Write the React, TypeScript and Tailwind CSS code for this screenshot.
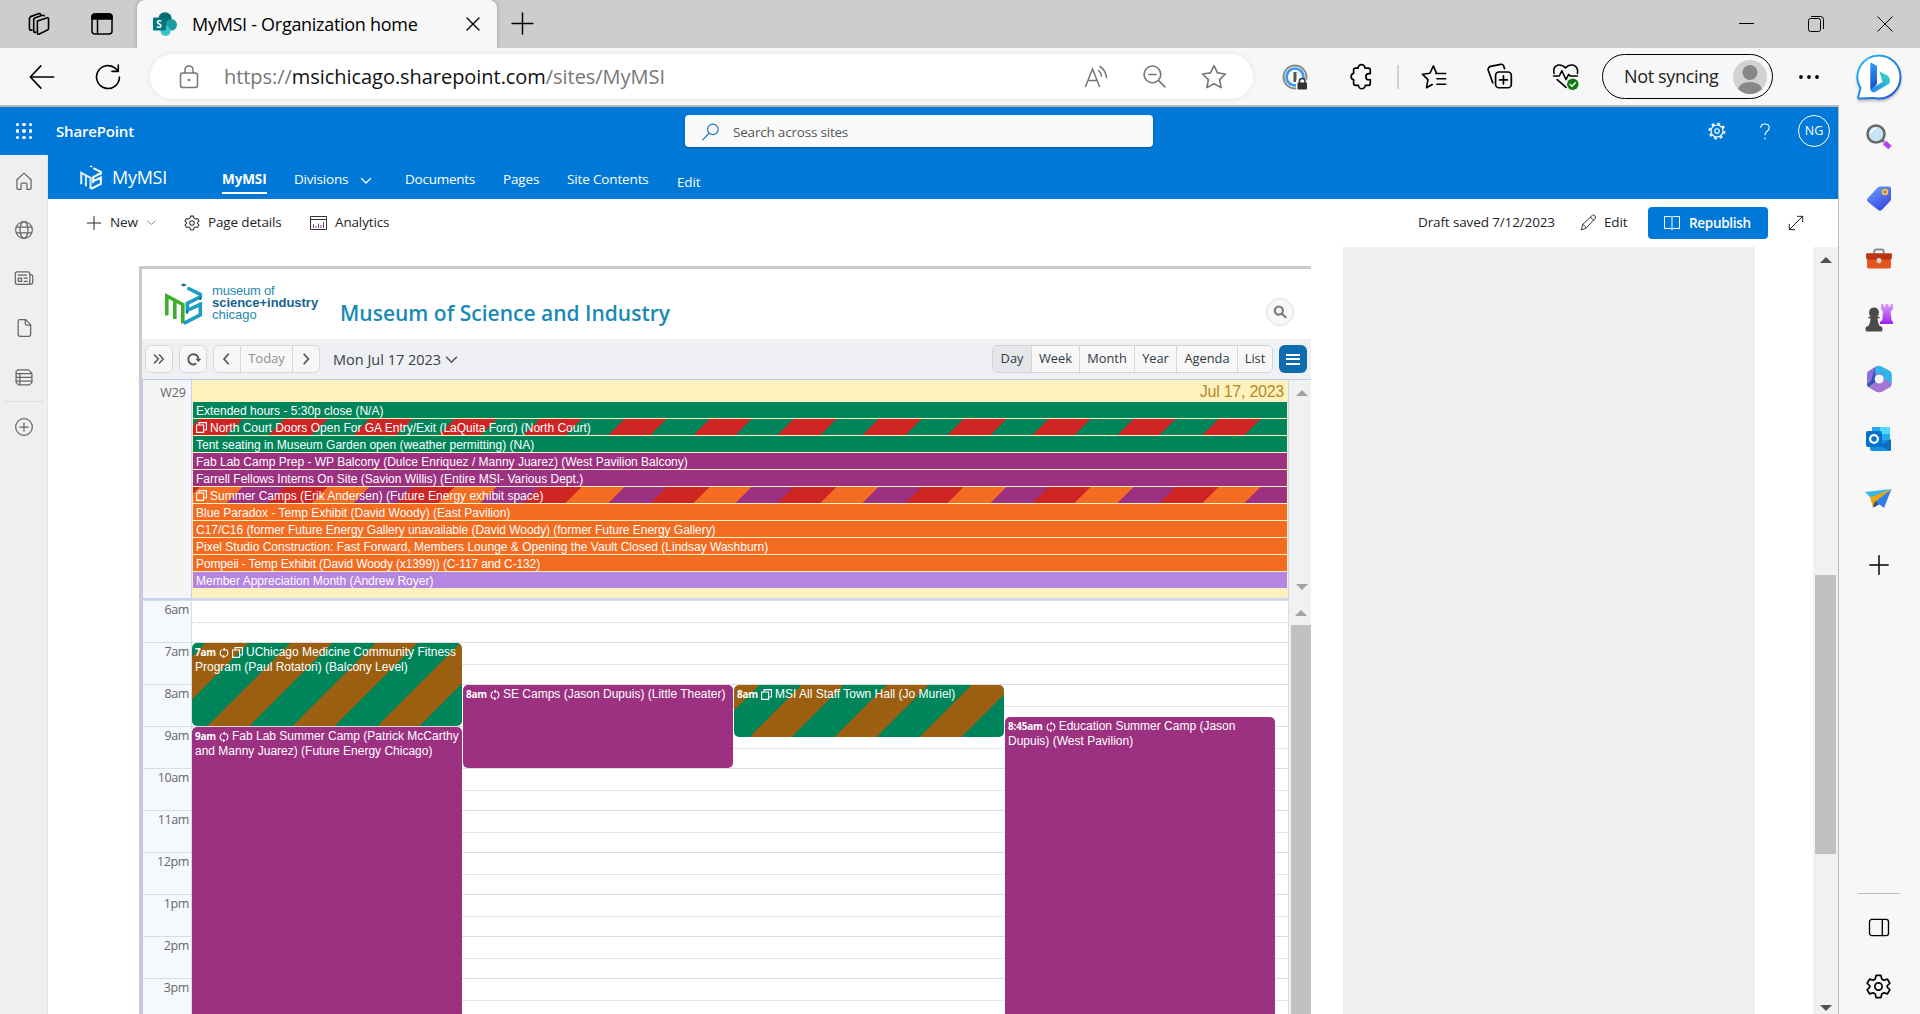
import type { ReactNode, SVGProps } from 'react';

type IconProps = SVGProps<SVGSVGElement> & { children?: ReactNode };

function Line({ children, ...rest }: IconProps) {
  return (
    <svg viewBox="0 0 24 24" fill="none" stroke="currentColor" strokeWidth={1.5} strokeLinecap="round" strokeLinejoin="round" {...rest}>
      {children}
    </svg>
  );
}

const GEAR =
  'M10 2.8h4l.7 3 1.8 1 2.9-.9 2 3.4-2.2 2.1v1.2l2.2 2.1-2 3.4-2.9-.9-1.8 1-.7 3h-4l-.7-3-1.8-1-2.9.9-2-3.4 2.2-2.1v-1.2L2.6 9.3l2-3.4 2.9.9 1.8-1z';

function Gear(props: IconProps) {
  return (
    <Line {...props}>
      <path d={GEAR} />
      <circle cx="12" cy="12" r="3" />
    </Line>
  );
}

function CogTeeth(props: IconProps) {
  return (
    <Line {...props}>
      <circle cx="12" cy="12" r="8" />
      <circle cx="12" cy="12" r="3" />
      <circle cx="12" cy="12" r="10" strokeWidth={2.6} strokeDasharray="3.9 3.95" strokeLinecap="butt" />
    </Line>
  );
}

function MsiMark({ m, s, dark, className }: { m: string; s: string; dark: string; className: string }) {
  return (
    <svg viewBox="163 282 41 44" fill="none" strokeWidth={3.6} className={className}>
      <path d="M166.800 315.500V296l16 8.500v19" stroke={m} />
      <path d="M174.800 300v19" stroke={m} />
      <path d="M187.500 288l12.800 6.300v2.500l-13 6.500v7l13-6v10.500l-16.500 8.500" stroke={s} />
      <path d="M180.500 285l3.200-1.600 3.200 1.600-3.200 1.600z" fill={dark} />
      <path d="M187.300 310.300v3.500M200.300 297v3" stroke={dark} strokeWidth={2} />
    </svg>
  );
}

function SharePointLogo() {
  return (
    <svg viewBox="0 0 24 24" className="h-6 w-6">
      <circle cx="12" cy="7" r="6.800" fill="#036c70" />
      <circle cx="18.200" cy="12.800" r="5.800" fill="#1a9ba1" />
      <circle cx="12.500" cy="19" r="5" fill="#37c6d0" />
      <rect x="0" y="5.500" width="13" height="13" rx="1" fill="#03787c" />
      <text x="3.300" y="15.600" fontSize="10" fontWeight="700" fill="#fff" fontFamily="Open Sans, sans-serif">S</text>
    </svg>
  );
}

function TabBar() {
  return (
    <div className="flex h-12 bg-[#cdcdcd] text-black">
      <div className="flex w-[137px] items-center">
        <Line className="ml-[26px] h-[26px] w-[26px]" strokeWidth={1.500}>
          <path d="M10.500 9.200 19 6.400q1.800-.5 1.800 1.200v8.600q0 1-1 1.400l-7.500 3.600q-1.800.7-1.800-1z" />
          <path d="M9 19.500q-1.900.7-1.900-1V8q0-1 1-1.500l7-2.500q1.300-.4 1.800.5" />
          <path d="M5.500 17.500q-2.300.6-2.300-1.200V6.600q0-1 1-1.400l7.200-2.600q1.400-.4 2 .3" />
        </Line>
        <svg viewBox="0 0 22 22" className="ml-[39px] h-[22px] w-[22px]" fill="none" stroke="#000" strokeWidth="1.500">
          <rect x="1" y="1" width="20" height="20" rx="3" />
          <path d="M1 6V4q0-3 3-3h14q3 0 3 3v2z" fill="#000" />
          <path d="M6.500 6v15" />
        </svg>
      </div>
      <div className="flex w-[360px] items-center rounded-t-[8px] bg-[#f7f7f7] pl-4 shadow-[0_0_4px_rgba(0,0,0,0.25)] [clip-path:inset(0_-4px_0_-4px)]">
        <SharePointLogo />
        <span className="ml-[15px] w-[272px] whitespace-nowrap text-[18px] tracking-[-0.29px]">MyMSI - Organization home</span>
        <Line className="ml-0 h-[18px] w-[18px] shrink-0" strokeWidth={1.800}>
          <path d="M4 4l16 16M20 4 4 20" />
        </Line>
      </div>
      <div className="flex flex-1 items-center">
        <Line className="ml-[13px] mb-[2px] h-[25px] w-[25px]" strokeWidth={1.400}>
          <path d="M12 2v20M2 12h20" />
        </Line>
        <div className="ml-auto mb-px flex items-center">
          <div className="h-px w-[15px] bg-black" />
          <svg viewBox="0 0 16 16" className="ml-[54px] h-4 w-4" fill="none" stroke="#000">
            <rect x=".5" y="2.500" width="12" height="13" rx="2" />
            <path d="M3 .5h9.500q3 0 3 3v9.500" />
          </svg>
          <svg viewBox="0 0 16 16" className="ml-[53px] mr-[27px] h-4 w-4" fill="none" stroke="#000">
            <path d="M.5.5l15 15M15.500.5l-15 15" />
          </svg>
        </div>
      </div>
    </div>
  );
}

function BingLogo() {
  return (
    <svg viewBox="0 0 46 46" className="ml-[36px] h-[46px] w-[46px] drop-shadow-[0_2px_1px_rgba(0,0,0,0.25)]">
      <defs>
        <linearGradient id="bingRing" x1="0" y1="0" x2="1" y2="1">
          <stop offset="0" stopColor="#29c3f1" />
          <stop offset="1" stopColor="#1b4fd8" />
        </linearGradient>
        <linearGradient id="bingB" x1="0" y1="0" x2="0" y2="1">
          <stop offset="0" stopColor="#2a9df4" />
          <stop offset="1" stopColor="#1749c9" />
        </linearGradient>
        <linearGradient id="bingTail" x1="1" y1="0" x2="0" y2="1">
          <stop offset="0" stopColor="#3be0c0" />
          <stop offset="1" stopColor="#1d7ff0" />
        </linearGradient>
      </defs>
      <path d="M23 1.500a21.500 21.500 0 1 1 0 43q-2.500 0-5-.6L3.500 44.500q-1.500 0-1.300-1.500L4.500 34A21.500 21.500 0 0 1 23 1.500z" fill="#fff" stroke="url(#bingRing)" strokeWidth="2" />
      <path d="M15 8.500l6 3.500v18l-6 6.500q-.7-1-.7-3V9z" fill="url(#bingB)" />
      <path d="M23.500 17.500l8 4q3.500 2.500 2 8L19 38q-4 1-4.500-3l12-7z" fill="url(#bingTail)" />
    </svg>
  );
}

function AddressBar() {
  return (
    <div className="flex h-[57px] items-center bg-[#f7f7f7] text-black">
      <Line className="ml-[28px] h-[28px] w-[28px]" strokeWidth={1.400}>
        <path d="M22 12H2.500M11 2.500 2 12l9 9.500" />
      </Line>
      <Line className="ml-[38px] h-[28px] w-[28px]" strokeWidth={1.400}>
        <path d="M21.800 12A9.800 9.800 0 1 1 18.500 4.700L20.500 6.800M20.800 1.800v5.400h-5.400" />
      </Line>
      <div className="ml-[28px] flex h-[45px] w-[1103px] items-center rounded-full bg-white text-[#767676] shadow-[0_0_6px_rgba(0,0,0,0.08)]">
        <svg viewBox="0 0 20 24" className="ml-[29px] h-6 w-5" fill="none" stroke="currentColor" strokeWidth="1.500">
          <rect x="1.500" y="8" width="17" height="14.500" rx="2.500" />
          <path d="M6 8V5q0-4 4-4t4 4v3" />
          <circle cx="10" cy="15" r="1.300" fill="currentColor" stroke="none" />
        </svg>
        <span className="ml-[25px] w-[860px] whitespace-nowrap text-[20px] tracking-[-0.05px]">
          https://<span className="text-[#111]">msichicago.sharepoint.com</span>/sites/MyMSI
        </span>
        <svg viewBox="0 0 24 24" className="h-6 w-6 shrink-0" fill="none" stroke="currentColor" strokeWidth="1.500" strokeLinecap="round">
          <path d="M1.500 21.500 8.500 4l7 17.500M4 15.500h9M14.500 5.500q2.500 2 3 5.500M16 1.500q5.500 3.500 6.500 11" />
        </svg>
        <Line className="ml-[34px] h-[25px] w-[25px] shrink-0" strokeWidth={1.500}>
          <circle cx="10" cy="10" r="8" />
          <path d="M16 16l6 6M6.500 10h7" />
        </Line>
        <Line className="ml-[33px] h-[28px] w-[28px] shrink-0" strokeWidth={1.400}>
          <path d="M12 2.200l3 6.300 6.800.9-5 4.800 1.300 6.900-6.100-3.300-6.100 3.300 1.300-6.900-5-4.800 6.800-.9z" />
        </Line>
      </div>
      <svg viewBox="0 0 26 26" className="ml-[29px] h-[26px] w-[26px]" fill="none">
        <circle cx="13" cy="13" r="11.500" stroke="#8b8b8b" strokeWidth="2" />
        <circle cx="13" cy="13" r="8.500" stroke="#3b99f5" strokeWidth="2.600" />
        <path d="M13 8v10" stroke="#555" strokeWidth="3" />
        <rect x="14" y="15" width="11" height="11" rx="2" fill="#f7f7f7" />
        <rect x="15.500" y="18.500" width="9.500" height="7" rx="1" fill="#333" />
        <path d="M17.500 19v-2q0-2.500 2.700-2.500T23 17v2" stroke="#333" strokeWidth="1.500" />
      </svg>
      <Line className="ml-[40px] h-[27px] w-[27px]" strokeWidth={1.500}>
        <path d="M6.500 4.500H9a3 3 0 0 1 6 0h3q1.800 0 1.800 1.800V9.500h-1.200a2.700 2.700 0 0 0 0 5.400h1.200v3q0 2-1.800 2H15.300a3 3 0 0 1-6 0H6.800Q5 19.900 5 18v-3a3 3 0 0 1 0-5.800V6.300Q5 4.500 6.500 4.500z" />
      </Line>
      <div className="ml-[22px] h-6 w-[2px] bg-[#d0d0d0]" />
      <Line className="ml-[21px] h-[28px] w-[28px]" strokeWidth={1.400}>
        <path d="M14 8.500 11.500 2.500 8.500 8.800l-6.500.8 4.800 4.600L5.600 21.200l4.900-2.700M13.500 9H22M14.500 13.500H22M14.500 18.200H22" />
      </Line>
      <Line className="ml-[38px] h-[27px] w-[27px]" strokeWidth={1.500}>
        <rect x="8.500" y="8" width="14" height="14" rx="3" />
        <path d="M15.500 11.500v7M12 15h7M6 17.500 2 6.500Q1.300 4 4 3l9-1.800q2-.4 2.700 1.400L16.500 5" />
      </Line>
      <svg viewBox="0 0 26 26" className="ml-[39px] h-[27px] w-[27px]" fill="none" stroke="#000" strokeWidth="1.500" strokeLinecap="round" strokeLinejoin="round">
        <path d="M2 10Q.5 3.500 6 2q4-.8 7 2.700Q16 1.200 20 2q5.500 1.500 4.500 8M1.500 12.500H7l2.500-5 4 8.500 2.500-5 1.500 1.500h7M5 16l8.500 7.500" />
        <circle cx="20" cy="20.500" r="5.500" fill="#107c10" stroke="none" />
        <path d="M17.500 20.700l1.800 1.700 3.200-3.300" stroke="#fff" strokeWidth="1.400" />
      </svg>
      <div className="ml-[23px] flex h-[45px] w-[171px] items-center rounded-full border-[1.500px] border-black">
        <span className="ml-[21px] w-[109px] whitespace-nowrap text-[18px] tracking-[-0.34px] text-[#222]">Not syncing</span>
        <svg viewBox="0 0 34 34" className="h-[34px] w-[34px]">
          <circle cx="17" cy="17" r="17" fill="#d4d2d0" />
          <circle cx="17" cy="12.500" r="7.500" fill="#8a8886" />
          <path d="M5 29q2-7 12-7t12 7q-5 5-12 5T5 29z" fill="#8a8886" />
        </svg>
      </div>
      <svg viewBox="0 0 22 6" className="ml-[25px] h-[6px] w-[22px]">
        <circle cx="3" cy="3" r="1.900" />
        <circle cx="11" cy="3" r="1.900" />
        <circle cx="19" cy="3" r="1.900" />
      </svg>
      <BingLogo />
    </div>
  );
}

function SuiteHeader() {
  return (
    <div className="flex h-12 items-center bg-[#0078d7] text-white">
      <div className="ml-[16px] grid w-4 grid-cols-3 gap-[3px]">
        {Array.from({ length: 9 }, (_, i) => (
          <span key={i} className="h-[3.300px] w-[3.300px] rounded-full bg-white" />
        ))}
      </div>
      <span className="ml-[24px] w-[629px] text-[15px] font-semibold tracking-[-0.17px]">SharePoint</span>
      <div className="flex h-8 w-[468px] items-center rounded-[4px] bg-[#fafafa] shadow-[0_1px_2px_rgba(0,0,0,0.3)]">
        <Line className="ml-[17px] mt-px h-[18px] w-[18px] text-[#0f6cbd]" strokeWidth={1.500}>
          <circle cx="14.500" cy="8.500" r="7" />
          <path d="M9.500 13.500 1 22.500" />
        </Line>
        <span className="ml-[13px] mt-[2px] text-[13.500px] tracking-[-0.2px] text-[#555]">Search across sites</span>
      </div>
      <CogTeeth className="ml-[555px] h-[18px] w-[18px]" strokeWidth={1.500} />
      <svg viewBox="0 0 12 18" className="ml-[33px] h-[17px] w-[12px]" fill="none" stroke="#fff" strokeWidth="1.200">
        <path d="M1.500 5Q1.500 1 6 1t4.500 4q0 2-2.300 3.800Q6 10.500 6 13" />
        <path d="M6 15.500v1.800" strokeWidth="1.500" />
      </svg>
      <div className="ml-[27px] flex h-8 w-8 items-center justify-center rounded-full border border-white pt-px text-[12.500px]">NG</div>
    </div>
  );
}

function SiteNav() {
  return (
    <div className="flex h-11 bg-[#0078d7] text-[13.500px] text-white">
      <div className="flex w-[174px] items-center pl-[31px]">
        <MsiMark m="#d5ebfb" s="#fff" dark="#fff" className="h-[27px] w-6" />
        <span className="ml-[9px] text-[18px] tracking-[-0.26px]">MyMSI</span>
      </div>
      <div className="flex pt-[14px] leading-[20px] tracking-[-0.15px] whitespace-nowrap">
        <div className="h-[25px] w-[45px] border-b-2 border-white font-bold tracking-[-0.1px]">MyMSI</div>
        <div className="ml-[27px] w-[55px] tracking-[-0.2px]">Divisions</div>
        <Line className="ml-[11px] mt-[6px] h-[12px] w-[12px]" strokeWidth={2.600}>
          <path d="M3 7l9 9 9-9" />
        </Line>
        <div className="ml-[33px] w-[70px] tracking-[-0.25px]">Documents</div>
        <div className="ml-[28px] w-[37px]">Pages</div>
        <div className="ml-[27px] w-[82px]">Site Contents</div>
        <div className="ml-[28px] mt-[3px]">Edit</div>
      </div>
    </div>
  );
}

function CommandBar() {
  return (
    <div className="flex h-12 items-center bg-white pb-px text-[13.500px] tracking-[-0.15px] whitespace-nowrap text-[#252525]">
      <Line className="ml-[38px] h-4 w-4" strokeWidth={1.500}>
        <path d="M12 2v20M2 12h20" />
      </Line>
      <span className="ml-[8px] w-[29px]">New</span>
      <Line className="ml-[8px] h-[9px] w-[9px] text-[#666]" strokeWidth={2}>
        <path d="M2 8l10 9 10-9" />
      </Line>
      <Gear className="ml-[27px] h-[18px] w-[18px] text-[#333]" strokeWidth={1.400} />
      <span className="ml-[7px] w-[75px]">Page details</span>
      <svg viewBox="0 0 17 14" className="ml-[27px] h-[14px] w-[17px]" fill="none" stroke="#333">
        <path d="M.5.5h16v13H.5zM.5 3.500h16" />
        <path d="M3.500 12V8.500M6 12v-2M8.500 12V7.500M11 12V9M13.500 12V6" stroke="#6b3a78" />
      </svg>
      <span className="ml-[8px]">Analytics</span>
      <span className="ml-auto w-[138px] tracking-[-0.13px]">Draft saved 7/12/2023</span>
      <Line className="ml-[24px] h-[17px] w-[17px]" strokeWidth={1.300}>
        <path d="M2 22l2-7.500L17.500 1.800q1.800-1 3.500.7t.6 3.500L9 19.500zM15 4.500 19.500 9M4.500 15l4.500 4.500" />
      </Line>
      <span className="ml-[7px] w-[24px]">Edit</span>
      <button className="ml-[20px] mt-px flex h-8 w-[120px] items-center rounded-[4px] bg-[#0078d7] font-semibold tracking-[-0.3px] text-white">
        <svg viewBox="0 0 16 16" className="ml-4 h-4 w-4" fill="none" stroke="#fff">
          <path d="M.5 1.500h6Q8 1.500 8 2.500v12q0-1-1.500-1h-6zM15.500 1.500h-6Q8 1.500 8 2.500M8 14.500q0-1 1.500-1h6v-12" />
        </svg>
        <span className="ml-[9px]">Republish</span>
      </button>
      <Line className="ml-[20px] mr-[34px] h-4 w-4" strokeWidth={1.500}>
        <path d="M2 22 22 2M14 2h8v8M2 14v8h8" />
      </Line>
    </div>
  );
}

function LeftRail() {
  return (
    <nav className="flex w-12 shrink-0 flex-col items-center border-r border-[#e6e6e6] bg-[#efefef] text-[#666]">
      <Line className="mt-[16px] h-5 w-5">
        <path d="M3.500 10.500 12 2.500l8.500 8v10q0 1.500-1.500 1.500h-3.500v-6q0-1.500-1.500-1.500h-4q-1.500 0-1.500 1.500v6H5q-1.500 0-1.500-1.500z" />
      </Line>
      <Line className="mt-[29px] h-5 w-5">
        <circle cx="12" cy="12" r="10" />
        <ellipse cx="12" cy="12" rx="4.800" ry="10" />
        <path d="M3 8.500h18M3 15.500h18" />
      </Line>
      <Line className="mt-[28px] h-5 w-5">
        <rect x="1.500" y="4.500" width="17.500" height="15" rx="2.500" />
        <path d="M19 8h1q2.500 0 2.500 2.500V17q0 2.500-3.500 2.500M5 8.500h10M5 12h4v4H5zM12 12h4M12 16h4" />
      </Line>
      <Line className="mt-[30px] h-5 w-5">
        <path d="M6.500 2H14l6 6v11.500q0 2.500-2.500 2.500h-10Q5 22 5 19.500V4q0-2 1.500-2zM13.500 2.500v4q0 2 2 2h4" />
      </Line>
      <Line className="mt-[29px] h-5 w-5">
        <path d="M4.500 3.500h13l4 4v11l-3 3h-13l-3-3v-13zM2.500 8h19M2.500 12.500h19M2.500 17h19M7 8v13" />
      </Line>
      <div className="mt-[14px] h-px w-[38px] bg-[#dedede]" />
      <Line className="mt-[15px] h-5 w-5">
        <circle cx="12" cy="12" r="10" />
        <path d="M12 7v10M7 12h10" />
      </Line>
    </nav>
  );
}

const CAL_BUTTON = 'flex h-7 items-center justify-center border-[#d5d7da] bg-[#f7f7f7] text-[13px]';
const VIEWS = [
  { label: 'Day', width: 'w-[38px] bg-[#e4e6ea]' },
  { label: 'Week', width: 'w-[48px] border-l bg-[#f7f7f7]' },
  { label: 'Month', width: 'w-[55px] border-l bg-[#f7f7f7]' },
  { label: 'Year', width: 'w-[42px] border-l bg-[#f7f7f7]' },
  { label: 'Agenda', width: 'w-[61px] border-l bg-[#f7f7f7]' },
  { label: 'List', width: 'w-[35px] border-l bg-[#f7f7f7]' },
];

function CalendarHeader() {
  return (
    <div className="flex h-[70px] bg-white">
      <div className="flex w-[198px] pl-[21px] pt-[13px]">
        <MsiMark m="#3dae2b" s="#1d9dc6" dark="#15688f" className="h-[44px] w-[41px]" />
        <div className="ml-[8px] mt-[3px] font-['Liberation_Sans',Arial,sans-serif] text-[13px] leading-[12px] text-[#2488ad]">
          <div className="tracking-[-0.2px] whitespace-nowrap">museum of</div>
          <div className="font-bold tracking-[-0.03px] text-[#156390]">science+industry</div>
          <div>chicago</div>
        </div>
      </div>
      <h1 className="mt-[30px] text-[21px] leading-[28px] font-semibold whitespace-nowrap text-[#1a8ab5]">Museum of Science and Industry</h1>
      <div className="ml-auto mr-[17px] mt-[29px] flex h-7 w-7 items-center justify-center rounded-full border border-[#d8dada] bg-[#f7f7f7]">
        <Line className="h-[14px] w-[14px] text-[#737d86]" strokeWidth={3.600}>
          <circle cx="10" cy="9.500" r="7" />
          <path d="M15.500 15l6 6" />
        </Line>
      </div>
    </div>
  );
}

function CalendarToolbar() {
  return (
    <div className="flex h-10 items-center bg-[#eff0f3] text-[#555]">
      <div className={`${CAL_BUTTON} ml-[3px] w-7 rounded-[6px] border`}>
        <Line className="h-[12px] w-[12px]" strokeWidth={3} strokeLinecap="butt" strokeLinejoin="miter">
          <path d="M2 3l8.500 9L2 21M12 3l8.500 9-8.500 9" />
        </Line>
      </div>
      <div className={`${CAL_BUTTON} ml-[6px] w-7 rounded-[6px] border`}>
        <Line className="h-[15px] w-[15px]" strokeWidth={3} strokeLinecap="butt">
          <path d="M16.500 18.500a8.200 8.200 0 1 1 3.500-7.500" />
          <path d="M15.500 11h8.500l-4.300 4.500z" fill="currentColor" strokeWidth={.5} />
        </Line>
      </div>
      <div className="ml-[6px] flex rounded-[6px]">
        <div className={`${CAL_BUTTON} w-[28px] rounded-l-[6px] border`}>
          <Line className="h-[14px] w-[14px]" strokeWidth={3} strokeLinecap="butt" strokeLinejoin="miter"><path d="M15 3 7 12l8 9" /></Line>
        </div>
        <div className={`${CAL_BUTTON} w-[51px] border-y text-[#8a8f94]`}>Today</div>
        <div className={`${CAL_BUTTON} w-[28px] rounded-r-[6px] border`}>
          <Line className="h-[14px] w-[14px]" strokeWidth={3} strokeLinecap="butt" strokeLinejoin="miter"><path d="M8 3l8 9-8 9" /></Line>
        </div>
      </div>
      <span className="ml-[13px] w-[112px] pt-px text-[14.500px] whitespace-nowrap text-[#3a4046]">Mon Jul 17 2023</span>
      <Line className="h-[13px] w-[13px]" strokeWidth={3} strokeLinecap="butt" strokeLinejoin="miter"><path d="M2 7l10 10L22 7" /></Line>
      <div className="ml-auto flex overflow-hidden rounded-[6px] border border-[#d0d2d5]">
        {VIEWS.map((v) => (
          <div key={v.label} className={`flex h-[26px] items-center justify-center border-[#d5d7da] text-[12.800px] text-[#2f3a44] ${v.width}`}>
            {v.label}
          </div>
        ))}
      </div>
      <div className="ml-[6px] mr-1 flex h-7 w-7 flex-col items-center justify-center gap-[2.500px] rounded-[6px] bg-[#0c6cad]">
        <span className="h-[2px] w-[14px] bg-white" />
        <span className="h-[2px] w-[14px] bg-white" />
        <span className="h-[2px] w-[14px] bg-white" />
      </div>
    </div>
  );
}

function CopyIcon({ className = '' }: { className?: string }) {
  return (
    <svg viewBox="0 0 11 11" className={`inline-block h-[11px] w-[11px] ${className}`} fill="none" stroke="#fff" strokeWidth="1.100">
      <path d="M.6 3h7v7.400h-7zM3 3V.6h7.400v7.400H7.600" />
    </svg>
  );
}

function RepeatIcon() {
  return (
    <svg viewBox="0 0 11 12" className="mx-[3px] inline-block h-[12px] w-[10px] align-[-3px]" fill="none" stroke="#fff" strokeWidth="1.200">
      <path d="M4 9.800Q1.200 9 1.200 6q0-2.500 2-3.600M7 2.200Q9.800 3 9.800 6q0 2.500-2 3.600" />
      <path d="M6.500 0v4.200L3.800 2.200zM4.500 12V7.800l2.700 2z" fill="#fff" stroke="none" />
    </svg>
  );
}

const ALL_DAY = [
  { text: 'Extended hours - 5:30p close (N/A)', color: 'bg-[#00855b]' },
  { text: 'North Court Doors Open For GA Entry/Exit (LaQuita Ford) (North Court)', color: 'bg-[repeating-linear-gradient(-45deg,#00855b_0_30px,#cf2424_30px_60px)]', copy: true },
  { text: 'Tent seating in Museum Garden open (weather permitting) (NA)', color: 'bg-[#00855b]' },
  { text: 'Fab Lab Camp Prep - WP Balcony (Dulce Enriquez / Manny Juarez) (West Pavilion Balcony)', color: 'bg-[#9c3182]' },
  { text: 'Farrell Fellows Interns On Site (Savion Willis) (Entire MSI- Various Dept.)', color: 'bg-[#9c3182]' },
  { text: 'Summer Camps (Erik Andersen) (Future Energy exhibit space)', color: 'bg-[repeating-linear-gradient(-45deg,#9c3182_0_30px,#f36c21_30px_60px,#cf2424_60px_90px)]', copy: true },
  { text: 'Blue Paradox - Temp Exhibit (David Woody) (East Pavilion)', color: 'bg-[#f36c21]' },
  { text: 'C17/C16 (former Future Energy Gallery unavailable (David Woody) (former Future Energy Gallery)', color: 'bg-[#f36c21] tracking-[-0.04px]' },
  { text: 'Pixel Studio Construction: Fast Forward, Members Lounge & Opening the Vault Closed (Lindsay Washburn)', color: 'bg-[#f36c21]' },
  { text: 'Pompeii - Temp Exhibit (David Woody (x1399)) (C-117 and C-132)', color: 'bg-[#f36c21] tracking-[-0.12px]' },
  { text: 'Member Appreciation Month (Andrew Royer)', color: 'bg-[#b585e1]' },
];

function Triangle({ down = false, className }: { down?: boolean; className: string }) {
  return (
    <svg viewBox="0 0 12 6" className={`h-[6px] w-[12px] ${className}`} fill="currentColor">
      <path d={down ? 'M0 0h12L6 6z' : 'M0 6h12L6 0z'} />
    </svg>
  );
}

function AllDay() {
  return (
    <div className="flex h-[221px] border-t border-[#bccdf5]">
      <div className="w-[49px] border-r border-b-2 border-[#c3d3f5] bg-[#f5f5f5] pt-[3px] pr-[5px] text-right text-[12.500px] leading-[20px] text-[#666]">W29</div>
      <div className="w-[1097px] border-r border-b-2 border-[#c9d8f3] bg-[#fff1be] pl-px">
        <div className="h-[22px] pr-[4px] text-right font-['Liberation_Sans',Arial,sans-serif] text-[16px] leading-[23px] tracking-[-0.25px] text-[#b38a1e]">Jul 17, 2023</div>
        <div className="mr-px flex flex-col gap-px font-['Liberation_Sans',Arial,sans-serif] text-[12px] leading-[16px] text-white">
          {ALL_DAY.map((e) => (
            <div key={e.text} className={`flex h-4 items-center pl-[3px] pt-px whitespace-nowrap ${e.color}`}>
              {e.copy && <CopyIcon className="mr-[3px] -mt-px" />}
              {e.text}
            </div>
          ))}
        </div>
      </div>
      <div className="flex flex-1 flex-col items-center justify-between bg-[#f1f1f1] pt-[10px] pb-[10px] pl-[3px] text-[#a3a3a3]">
        <Triangle className="" />
        <Triangle down className="" />
      </div>
    </div>
  );
}

const HOURS = ['6am', '7am', '8am', '9am', '10am', '11am', '12pm', '1pm', '2pm', '3pm'];
const BROWN_GREEN = 'bg-[repeating-linear-gradient(-45deg,#00855b_0_30px,#9c5f12_30px_60px)]';

function Event({ time, repeat, copy, children, className }: { time: string; repeat?: boolean; copy?: boolean; children: ReactNode; className: string }) {
  return (
    <div className={`w-[270px] overflow-hidden rounded-[5px] pl-[3px] pt-[2px] font-['Liberation_Sans',Arial,sans-serif] text-[12px] leading-[15px] text-white ${className}`}>
      <span className="font-['Open_Sans',sans-serif] text-[10px] font-bold tracking-[-0.2px]">{time}</span>
      {repeat && <RepeatIcon />}
      {copy && <CopyIcon className={`align-[-2px] mr-[3px] ${repeat ? '' : 'ml-[3px]'}`} />}
      {children}
    </div>
  );
}

function DayGrid() {
  return (
    <div className="flex h-[414px] overflow-hidden">
      <div className="relative w-[1146px]">
        {HOURS.map((h) => (
          <div key={h} className="flex h-[42px]">
            <div className="w-[49px] border-r border-t border-[#dcdcdc] bg-[#f5f9fd] pr-[2px] text-right text-[12.500px] leading-[18px] tracking-[-0.4px] text-[#666]">{h}</div>
            <div className="w-[1097px] border-t border-r border-[#dcdcdc]">
              <div className="h-[22px] border-b border-dotted border-[#d0d0d0]" />
            </div>
          </div>
        ))}
        <div className="absolute inset-y-0 left-[49px] flex items-start gap-px">
          <div className="flex flex-col gap-px pt-[43px]">
            <Event time="7am" repeat copy className={`h-[83px] ${BROWN_GREEN}`}>
              UChicago Medicine Community Fitness Program (Paul Rotatori) (Balcony Level)
            </Event>
            <Event time="9am" repeat className="h-[330px] bg-[#9c3182]">
              Fab Lab Summer Camp (Patrick McCarthy and Manny Juarez) (Future Energy Chicago)
            </Event>
          </div>
          <Event time="8am" repeat className="mt-[85px] h-[83px] bg-[#9c3182] whitespace-nowrap">
            SE Camps (Jason Dupuis) (Little Theater)
          </Event>
          <Event time="8am" copy className={`mt-[85px] h-[52px] ${BROWN_GREEN}`}>
            MSI All Staff Town Hall (Jo Muriel)
          </Event>
          <Event time="8:45am" repeat className="mt-[117px] h-[330px] bg-[#9c3182]">
            Education Summer Camp (Jason Dupuis) (West Pavilion)
          </Event>
        </div>
      </div>
      <div className="flex flex-1 flex-col items-end bg-[#f1f1f1]">
        <Triangle className="mt-[10px] mr-[4px] mb-[9px] text-[#a3a3a3]" />
        <div className="w-5 flex-1 bg-[#c1c1c1]" />
      </div>
    </div>
  );
}

function Calendar() {
  return (
    <div className="ml-[91px] mt-[19px] flex w-[1172px] flex-col border-t-[3px] border-l-[3px] border-[#cbcbcb]">
      <CalendarHeader />
      <CalendarToolbar />
      <div className="border-l border-[#bccdf5]">
        <AllDay />
        <DayGrid />
      </div>
    </div>
  );
}

function EdgeSidebar() {
  return (
    <aside className="flex w-[81px] shrink-0 flex-col items-center bg-[#f7f7f7] pr-[2px]">
      <svg viewBox="0 0 26 26" className="mt-[19px] h-[26px] w-[26px]">
        <path d="M18.500 18.500l5.500 5" stroke="#b83df5" strokeWidth="5" />
        <path d="M15 15l3 3" stroke="#777" strokeWidth="3" />
        <circle cx="10" cy="10" r="8.500" fill="#c4e4f8" stroke="#666" strokeWidth="2.500" />
        <path d="M5 9q1-4 5-4.500" stroke="#fff" strokeWidth="1.500" fill="none" />
      </svg>
      <svg viewBox="0 0 26 26" className="mt-[35px] h-[26px] w-[26px]">
        <defs>
          <linearGradient id="tag" x1="0" y1="0" x2=".6" y2="1">
            <stop offset="0" stopColor="#6ba6ff" />
            <stop offset="1" stopColor="#3d46e8" />
          </linearGradient>
        </defs>
        <path d="M14 1.500h9q2 0 2 2V14q0 1-.8 2l-8.500 9q-1.800 1.500-3.500 0L2 17q-1.800-2-.3-3.800L12 2.300q1-.8 2-.8z" fill="url(#tag)" />
        <circle cx="19" cy="7" r="2.300" fill="#6c6fe0" stroke="#fbc02d" strokeWidth="2" />
      </svg>
      <svg viewBox="0 0 28 22" className="mt-[37px] h-[21px] w-[28px]">
        <path d="M9 6V4q0-2.500 2.500-2.500h5Q19 1.500 19 4v2" fill="none" stroke="#8b8b8b" strokeWidth="2" />
        <rect x="1.500" y="8" width="25" height="13.500" rx="1.500" fill="#e2551f" />
        <path d="M1.500 5.500h25q1 0 1 1V10q0 2-2 2h-23q-2 0-2-2V6.500q0-1 1-1z" fill="#b9340f" />
        <rect x="11.500" y="10.500" width="5" height="5.500" rx="2" fill="#d0d0d0" />
      </svg>
      <svg viewBox="0 0 28 28" className="mt-[35px] h-[28px] w-[28px]">
        <defs>
          <linearGradient id="rook" x1="0" y1="0" x2="0" y2="1">
            <stop offset="0" stopColor="#d9a0f7" />
            <stop offset="1" stopColor="#a020f0" />
          </linearGradient>
        </defs>
        <path d="M16 0h2.500v2.500h2V0h3v2.500h2V0H28v5l-2.500 2.500 1 8.500 1.500 2v2H15v-2l2.300-2 .7-8.500L16 5z" fill="url(#rook)" />
        <path d="M9 3.500a5 5 0 0 1 3.300 8.700q2.700.3 2.700 2H12.500q0 4.500 2 7.800 3 .5 3 2.500 0 3-1.500 3H2q-1.500 0-1.500-3 0-2 3-2.500 2-3.300 2-7.800H3q0-1.700 2.700-2A5 5 0 0 1 9 3.500z" fill="#4b4b4b" />
      </svg>
      <svg viewBox="0 0 26 28" className="mt-[33px] h-[28px] w-[26px]">
        <path d="M13 1 24 6.500q1.500 1 1.500 2.500v10q0 2-1.500 3l-8 4.500q-3 1.300-6 0L2.500 22Q1 21 1 19V9q0-2 1.500-3L10 1.500q1.500-.8 3-.5z" fill="#8d6fe0" />
        <path d="M10 1.500q3-1.300 5.500 0L24 6q1.500 1 1.500 3v10l-8.500-5V9L9 8q0-5 1-6.500z" fill="#2fb5e8" />
        <path d="M9 2.500V17l-6.500 5Q1 21 1 19l4-3z" fill="#2c57a8" />
        <path d="M25.500 19q0 2-1.500 3l-8 4.500q-3 1.300-6 0L2.500 22 9 18l4 1 6-5z" fill="#a274d4" />
        <circle cx="13.200" cy="14" r="4.500" fill="#f7f7f7" />
      </svg>
      <svg viewBox="0 0 26 26" className="mt-[33px] h-[26px] w-[26px]">
        <path d="M6 1h18v14H6z" fill="#28a8ea" />
        <path d="M14 1h10v7H14z" fill="#50d9ff" />
        <path d="M4 14h21v9q0 2-2 2H6q-2 0-2-2z" fill="#1490df" />
        <path d="M25 13 14 20l10 5q1-.5 1-2z" fill="#0f6cbd" />
        <rect x="0" y="5" width="16" height="16" rx="2" fill="#0672cf" />
        <circle cx="8" cy="13" r="3.900" fill="none" stroke="#fff" strokeWidth="2.200" />
      </svg>
      <svg viewBox="0 0 27 20" className="mt-[37px] h-[20px] w-[27px]">
        <path d="M0 3 26.500 0 6 9z" fill="#38b6ea" />
        <path d="M26.500 0 19 19l-9-7z" fill="#2f80e8" />
        <path d="M5 8.500 26.500 0 11 12v5.500L8 18.500z" fill="#f0a30a" />
        <path d="M8 18.500 10 12l4.500 3.300z" fill="#1f4f91" />
      </svg>
      <Line className="mt-[45px] h-[22px] w-[22px] text-black" strokeWidth={1.600}>
        <path d="M12 2v20M2 12h20" />
      </Line>
      <div className="mt-auto h-px w-[42px] bg-[#bdbdbd]" />
      <svg viewBox="0 0 22 20" className="mt-[24px] h-[19px] w-[22px]" fill="none" stroke="#000" strokeWidth="1.400">
        <rect x="1" y="1.500" width="20" height="17" rx="2.500" />
        <path d="M14.500 1.500v17" />
      </svg>
      <Gear className="mt-[35px] mb-[13px] h-[29px] w-[29px] text-black" strokeWidth={1.400} />
    </aside>
  );
}

function PageScrollbar() {
  return (
    <div className="flex w-[25px] flex-col items-center bg-[#f1f1f1] text-[#505050]">
      <Triangle className="mt-[10px]" />
      <div className="mt-[312px] h-[279px] w-[21px] bg-[#c1c1c1]" />
      <Triangle down className="mt-auto mb-[3px]" />
    </div>
  );
}

export default function App() {
  return (
    <div className="flex h-[1014px] w-[1920px] flex-col overflow-hidden bg-white font-['Open_Sans','Noto_Sans',sans-serif]">
      <TabBar />
      <AddressBar />
      <div className="flex min-h-0 flex-1">
        <div className="flex w-[1839px] flex-col border-t-2 border-r border-[#bababa]">
          <SuiteHeader />
          <div className="flex min-h-0 flex-1">
            <LeftRail />
            <div className="flex min-w-0 flex-1 flex-col">
              <SiteNav />
              <CommandBar />
              <div className="flex min-h-0 flex-1 overflow-hidden">
                <Calendar />
                <div className="ml-[32px] w-[412px] bg-[#efefef]" />
                <div className="flex-1" />
                <PageScrollbar />
              </div>
            </div>
          </div>
        </div>
        <EdgeSidebar />
      </div>
    </div>
  );
}
